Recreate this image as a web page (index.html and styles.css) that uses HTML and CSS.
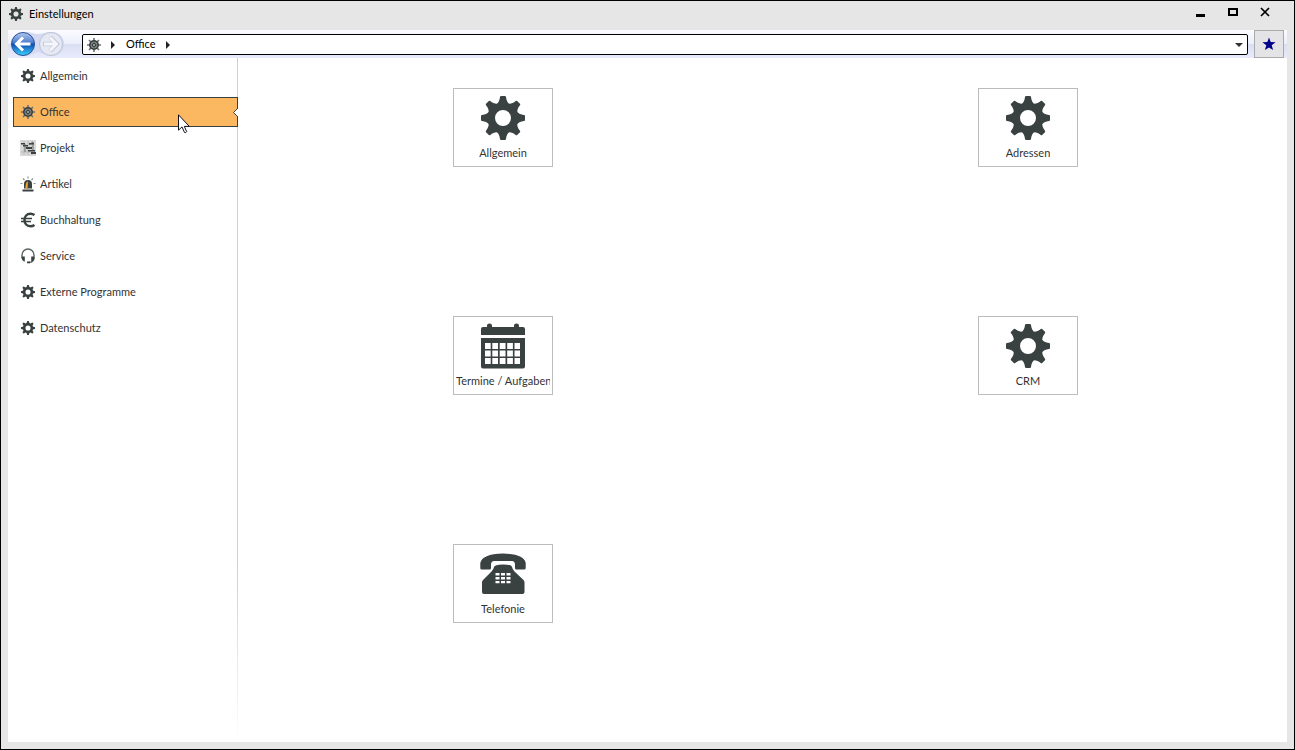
FILE: index.html
```html
<!DOCTYPE html>
<html lang="de">
<head>
<meta charset="utf-8">
<title>Einstellungen</title>
<link rel="stylesheet" href="styles.css">
</head>
<body>
<svg class="defs" aria-hidden="true">
  <defs>
    <path id="tooth" d="M-2-22H2Q2.800-22 3-21C3.400-17.500 4.500-15 7-13.500L5-11H-5L-7-13.500C-4.500-15-3.400-17.500-3-21Q-2.800-22-2-22Z"/>
    <symbol id="gear" viewBox="-22 -22 44 44">
      <g fill="#394141">
        <circle r="11.3" fill="none" stroke="#394141" stroke-width="6.600"/>
        <use href="#tooth"/><use href="#tooth" transform="rotate(45)"/><use href="#tooth" transform="rotate(90)"/><use href="#tooth" transform="rotate(135)"/><use href="#tooth" transform="rotate(180)"/><use href="#tooth" transform="rotate(225)"/><use href="#tooth" transform="rotate(270)"/><use href="#tooth" transform="rotate(315)"/>
      </g>
    </symbol>
    <symbol id="wheel" viewBox="1 1 14 14">
      <path d="M8 1v14M1 8h14M3 3l10 10M13 3L3 13" stroke="#687070" stroke-width="1.6"/>
      <circle cx="8" cy="8" r="5" fill="#394141"/>
      <circle cx="8" cy="8" r="3" fill="none" stroke="#9aa0a0" stroke-width=".8"/>
      <path d="M6.5 6.500l3 3m0-3l-3 3" stroke="#a8adad" stroke-width=".8"/>
    </symbol>
  </defs>
</svg>
<div class="window">
  <header class="titlebar">
    <svg class="icon"><use href="#gear"/></svg>
    <h1 class="title">Einstellungen</h1>
    <div class="controls">
      <button class="control" aria-label="Minimieren"><svg width="12" height="12"><path d="M1 8h9v3H1z"/></svg></button>
      <button class="control" aria-label="Maximieren"><svg width="12" height="12"><path d="M1 2h10v8H1zM3 4v4h6V4z" fill-rule="evenodd"/></svg></button>
      <button class="control" aria-label="Schließen"><svg width="12" height="12"><path d="M2 2l8 8M10 2l-8 8" stroke="#000" stroke-width="1.7"/></svg></button>
    </div>
  </header>
  <div class="client">
    <nav class="toolbar" aria-label="Navigation">
      <svg class="history-bg" viewBox="0 0 62 28" aria-hidden="true"><path d="M16 2C25 2 25 4 30 4S36 2 44 2A12 12 0 0 1 44 26C36 26 34 22 30 22S25 26 16 26Z" fill="#d3daf1"/></svg>
      <button class="history" aria-label="Zurück">
        <svg width="26" height="26" viewBox="0 0 26 26">
          <defs><linearGradient id="blue" x2="0" y2="1"><stop stop-color="#b5c8ef"/><stop offset=".45" stop-color="#4a7bcc"/><stop offset=".5" stop-color="#0a4bb0"/><stop offset="1" stop-color="#40d2ff"/></linearGradient></defs>
          <circle cx="13" cy="13" r="11.5" fill="url(#blue)" stroke="#2b4f94"/>
          <path d="M20.500 13H6.500M13 6.500L6.500 13l6.500 6.500" fill="none" stroke="#fff" stroke-width="3"/>
        </svg>
      </button>
      <button class="history" aria-label="Vorwärts" disabled>
        <svg width="26" height="26" viewBox="0 0 26 26">
          <circle cx="13" cy="13" r="11.5" fill="#e6e9f3" stroke="#bcc3d6"/>
          <path d="M5 13h14M12 6l7 7-7 7" fill="none" stroke="#c5cada" stroke-width="4.400"/>
          <path d="M6 13h12M12 6.500l6.500 6.500-6.500 6.500" fill="none" stroke="#f5f6fb" stroke-width="2.800"/>
        </svg>
      </button>
      <div class="address">
        <svg class="icon"><use href="#wheel"/></svg>
        <svg class="arrow" viewBox="0 0 4 8"><path d="M0 0l4 4-4 4z"/></svg>
        <a class="crumb" href="#office">Office</a>
        <svg class="arrow" viewBox="0 0 4 8"><path d="M0 0l4 4-4 4z"/></svg>
        <button class="drop" aria-label="Verlauf"><svg width="8" height="4"><path d="M0 0h8L4 4z" fill="#333"/></svg></button>
      </div>
      <button class="favorite" aria-label="Favoriten"><svg width="14" height="14" viewBox="0 0 14 14"><path d="M7 .5l1.700 4.600 4.900.2-3.900 3 1.400 4.800L7 10.400l-4.100 2.700 1.400-4.800-3.900-3 4.900-.2z" fill="#00008b"/></svg></button>
    </nav>
    <div class="body">
      <nav class="sidebar" aria-label="Bereiche">
        <a class="item" href="#allgemein"><svg class="icon"><use href="#gear"/></svg>Allgemein</a>
        <a class="item active" id="office" href="#office" aria-current="page"><svg class="icon"><use href="#wheel"/></svg>Office
          <svg class="notch" viewBox="0 0 5 9"><path d="M5 0v9L.500 4.500z" fill="#fff"/><path d="M5 0L.500 4.500 5 9" fill="none" stroke="#394141"/></svg>
          <svg class="pointer" viewBox="0 0 12 20"><path d="M.5.800v15.400l3.500-3.300 2.500 5.600q1.300.7 2.200-.9l-2.400-5.200h5z" fill="#fff" stroke="#101020"/></svg>
        </a>
        <a class="item" href="#projekt"><svg class="icon" viewBox="1 1 14 14"><path d="M0 0h16v16H0z" fill="#d8d8d8"/><path d="M4 1v14M8 1v14M12 1v14M1 12h14" stroke="#b4b4b4" stroke-width=".8"/><path d="M1 3h4v1.500H1zM3 5h5v1.500H3zM6 7h6v2H6zM9 3h5v1.500H9zM8 10h7v1.500H8zM11 12h5v2h-5z" fill="#394141"/><path d="M5 4v8M9 5l4-3v8" fill="none" stroke="#555" stroke-width=".8"/></svg>Projekt</a>
        <a class="item" href="#artikel"><svg class="icon" viewBox="1 1 14 14"><path d="M8 .5v2M3 2.500L4.500 4M13 2.500L11.500 4M.5 7.500h2M13.500 7.500h2" stroke="#8c9292" stroke-width="1.200"/><path d="M4 12.500V8q0-4 4-4t4 4v4.500zM2.500 13.500h11v2h-11z" fill="#394141"/><path d="M5.200 12.500L6 7.500Q6.500 5.500 8 5.500L7.500 12.500z" fill="#f0a52e"/></svg>Artikel</a>
        <a class="item" href="#buchhaltung"><svg class="icon" viewBox="1 1 14 14"><path d="M14.500 3Q12.500 1.700 10.500 1.700C6.500 1.700 4.500 5 4.500 8S6.500 14.300 10.500 14.300q2 0 4-1.300" fill="none" stroke="#394141" stroke-width="2.500"/><path d="M1 6.500h11M1 9.500h10" stroke="#394141" stroke-width="1.500"/></svg>Buchhaltung</a>
        <a class="item" href="#service"><svg class="icon" viewBox="1 1 14 14"><path d="M2 10V7a6 6 0 0 1 12 0v3q0 4-5 4.500" fill="none" stroke="#5c6464" stroke-width="1.400"/><path d="M2 8.500h2.800v5H4Q2 13 1.500 10zM14 8.500h-2.800v5h.8q2-.5 2.500-3.500zM7 13.500h3v1.800H7z" fill="#394141"/></svg>Service</a>
        <a class="item" href="#extern"><svg class="icon"><use href="#gear"/></svg>Externe Programme</a>
        <a class="item" href="#datenschutz"><svg class="icon"><use href="#gear"/></svg>Datenschutz</a>
      </nav>
      <main class="tiles">
        <button class="tile"><svg class="tile-icon"><use href="#gear"/></svg><span class="label">Allgemein</span></button>
        <button class="tile"><svg class="tile-icon"><use href="#gear"/></svg><span class="label">Adressen</span></button>
        <button class="tile"><svg class="tile-icon" viewBox="0 0 44 44"><g fill="#394141"><path d="M0 11V5q0-2 2-2h4V1.500q0-2 2.500-2T11 1.500V3h22V1.500q0-2 2.500-2t2.500 2V3h4q2 0 2 2v6z"/><path fill-rule="evenodd" d="M0 14h44v28.500q0 2-2 2H2q-2 0-2-2zM4 19v6h5.700v-6zM11.300 19v6H17v-6zM18.700 19v6h5.800v-6zM26.200 19v6h5.700v-6zM33.500 19v6H39v-6zM4 26.500v6h5.700v-6zM11.300 26.500v6H17v-6zM18.700 26.500v6h5.800v-6zM26.200 26.500v6h5.700v-6zM33.500 26.500v6H39v-6zM4 34v6h5.700v-6zM11.300 34v6H17v-6zM18.700 34v6h5.800v-6zM26.200 34v6h5.700v-6zM33.500 34v6H39v-6z"/></g></svg><span class="label">Termine / Aufgaben</span></button>
        <button class="tile"><svg class="tile-icon"><use href="#gear"/></svg><span class="label">CRM</span></button>
        <button class="tile"><svg class="tile-icon" viewBox="0 0 44 44"><g fill="#394141"><path d="M-.7 16V11Q1 2 22 1.500 43 2 44.700 11v5q0 1.500-1.500 1.500h-8Q34 17.500 34 16v-4q-.5-3-3-3H13q-2.500 0-3 3v4q0 1.500-1.500 1.500h-8Q-.7 17.500-.7 16z"/><path fill-rule="evenodd" d="M13 15q.5-2.500 9-2.500t9 2.500q.5 2.500 2.500 4.500l9 8.500q1 1 1 2.500V40q0 2-2 2H3q-2 0-2-2v-9.500Q1 29 2 28l8.500-8.500q2-2 2.500-4.500zM14.500 21v2.500h4V21zM20 21v2.500h4V21zM25.500 21v2.500h4V21zM14.500 25v2.500h4V25zM20 25v2.500h4V25zM25.500 25v2.500h4V25zM14.500 29v2.200h4V29zM20 29v2.200h4V29zM25.500 29v2.200h4V29z"/></g></svg><span class="label">Telefonie</span></button>
      </main>
    </div>
  </div>
</div>
</body>
</html>
```
FILE: styles.css
```css
* { box-sizing: border-box; }
body { margin: 0; color: #333; font: 11px/16px Lato, "Noto Sans", sans-serif; }
button { margin: 0; padding: 0; border: 0; background: none; color: inherit; font: inherit; }
a { color: inherit; text-decoration: none; }
svg { display: block; flex: none; overflow: visible; }
.defs { position: absolute; width: 0; height: 0; }
.window { display: flex; flex-direction: column; min-height: 100vh; padding: 0 7px 7px; border: 1px solid #000; background: #e6e6e6; }
.titlebar { display: flex; align-items: center; height: 29px; padding: 0 12px 4px 1px; color: #000; }
.icon { width: 14px; height: 14px; }
.title { flex: 1; margin: 0 0 0 6px; font-size: 11px; font-weight: normal; }
.controls { display: flex; gap: 12px; padding-bottom: 4px; }
.control { display: grid; place-items: center; width: 20px; height: 20px; }
.client { display: flex; flex: 1; flex-direction: column; background: #fff; }
.toolbar { position: relative; display: flex; align-items: center; gap: 2px; height: 28px; padding: 0 3px 0 2px; background: linear-gradient(#fbfcff, #eceffa 49%, #d9dff2 50%, #e8ebfc); }
.history-bg { position: absolute; left: 0; top: 0; width: 62px; height: 28px; }
.history { position: relative; width: 26px; height: 26px; }
.address { display: flex; flex: 1; align-items: center; height: 21px; margin: 1px 4px 0 16px; padding: 0 4px; border: 1px solid #000; border-radius: 2px; background: #fff; color: #000; }
.arrow { width: 4px; height: 8px; margin: 0 11px 0 10px; fill: #222; }
.crumb { padding-bottom: 2px; }
.crumb + .arrow { margin-right: 0; }
.drop { margin-left: auto; }
.favorite { display: grid; place-items: center; width: 30px; height: 28px; border: 1px solid #aaa; background: #e4e4e6; }
.body { display: flex; flex: 1; }
.sidebar { display: flex; flex: none; flex-direction: column; gap: 6px; width: 230px; padding: 3px 0 0 5px; background: linear-gradient(#d0d0d0 75%, #fff) right / 1px 100% no-repeat; }
.item { position: relative; display: flex; align-items: center; gap: 5px; height: 30px; padding: 0 7px; border: 1px solid transparent; }
.active { border-color: #394141; background: #fbb861; }
.notch { position: absolute; right: -1px; top: 10px; width: 5px; height: 9px; }
.pointer { position: absolute; z-index: 1; left: 164px; top: 16px; width: 12px; height: 20px; }
.tiles { display: grid; flex: 1; grid-template-columns: 1fr 1fr; grid-template-rows: repeat(3, 1fr); column-gap: 7px; padding-left: 6px; justify-items: center; }
.tile { display: flex; flex-direction: column; align-items: center; gap: 5px; width: 100px; height: 79px; margin-top: 30px; padding: 7px 2px 5px; border: 1px solid #bcbcbc; background: #fff; }
.tile-icon { width: 44px; height: 44px; }
.label { max-width: 100%; overflow: hidden; white-space: nowrap; }
```
